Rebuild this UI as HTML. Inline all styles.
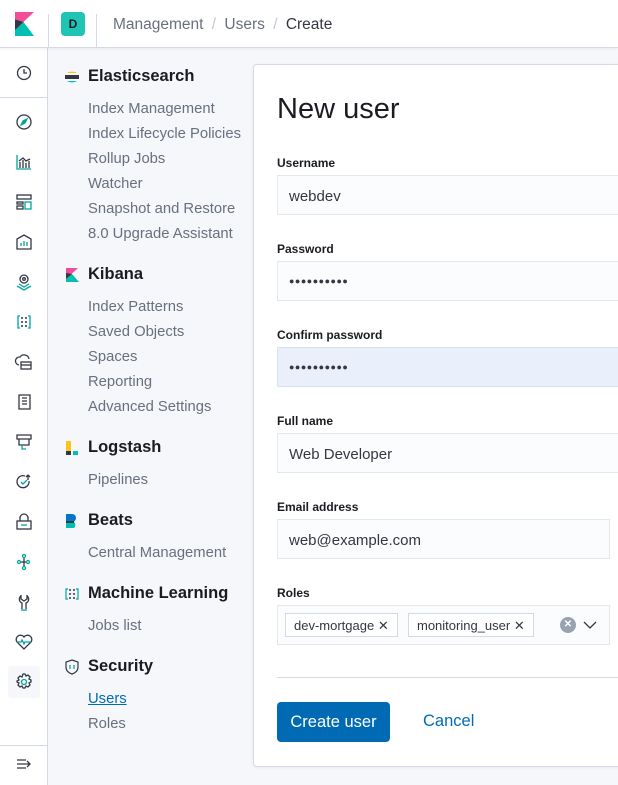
<!DOCTYPE html>
<html><head><style>
*{box-sizing:border-box;margin:0;padding:0}
body{width:618px;height:785px;overflow:hidden;background:#f5f7fa;font-family:"Liberation Sans",sans-serif;position:relative;color:#343741}
.hdr{position:absolute;left:0;top:0;width:618px;height:48px;background:#fff;border-bottom:1px solid #d3dae6;box-shadow:0 1px 3px rgba(0,0,0,.06);z-index:3}
.rail{position:absolute;left:0;top:48px;width:48px;height:737px;background:#fff;border-right:1px solid #d3dae6;z-index:2}
.ic{position:absolute;left:14px;width:20px;height:20px}
.sec{position:absolute;left:64px;font-weight:bold;font-size:16.5px;color:#1a1c21;display:flex;align-items:center}
.sec .lg{width:16px;height:16px;margin-right:8px}
.it{position:absolute;left:88px;font-size:14.8px;color:#69707d}
.panel{position:absolute;left:253px;top:64px;width:400px;height:703px;background:#fff;border:1px solid #d3dae6;border-radius:4px;box-shadow:0 1px 4px rgba(0,0,0,.05)}
.lbl{position:absolute;left:277px;font-size:12px;font-weight:bold;color:#1a1c21}
.inp{position:absolute;left:277px;width:360px;height:40px;background:#fbfcfd;border:1px solid #e4e7ec;font-size:15px;color:#343741;padding:12px 11px;}
.dots{font-size:9px;letter-spacing:0.5px;padding-top:14px}
</style></head><body>
<div class="hdr">
 <svg style="position:absolute;left:15px;top:12px" width="19" height="24" viewBox="0 0 19 24"><path d="M0 0H19L0 18Z" fill="#f04e98"/><path d="M0 18L8.5 10 19 24H0Z" fill="#00bfb3"/><path d="M0 7.5L8.5 10 0 18Z" fill="#343741"/></svg>
 <div style="position:absolute;left:48px;top:14px;width:1px;height:34px;background:#d3dae6"></div>
 <div style="position:absolute;left:61px;top:12px;width:24px;height:24px;border-radius:4px;background:#20c4b4;font-size:12px;font-weight:bold;color:#1a1c21;text-align:center;line-height:24px">D</div>
 <div style="position:absolute;left:96px;top:14px;width:1px;height:34px;background:#d3dae6"></div>
 <div style="position:absolute;left:113px;top:16px;font-size:15.5px;color:#69707d">Management <span style="color:#c2c8d2;margin:0 4px">/</span> Users <span style="color:#c2c8d2;margin:0 4px">/</span> <span style="color:#343741">Create</span></div>
</div>
<div class="rail">
 <div style="position:absolute;left:0;top:49px;width:48px;height:1px;background:#d3dae6"></div>
 <svg class="ic" style="top:15px" viewBox="0 0 20 20" fill="none" stroke="#343741" stroke-width="1.3"><circle cx="10" cy="10" r="6.5"/><path d="M10 6v4h3"/></svg>
 <svg class="ic" style="top:64px" viewBox="0 0 20 20" fill="none" stroke="#343741" stroke-width="1.3"><circle cx="10" cy="10" r="7"/><path d="M7 13l2-4 4-2-2 4z" fill="#00a69b" stroke="#00a69b"/></svg>
 <svg class="ic" style="top:104px" viewBox="0 0 20 20" fill="none" stroke="#00a69b" stroke-width="1.3"><path d="M3 3v14h14" /><path d="M6 16v-6M9 16V8M12 16v-5M15 16V9M5 9l4-3 3 3 4-2" stroke="#343741"/></svg>
 <svg class="ic" style="top:144px" viewBox="0 0 20 20" fill="none" stroke="#343741" stroke-width="1.3"><rect x="3" y="3" width="14" height="4"/><rect x="3" y="10" width="6" height="2"/><rect x="3" y="14" width="6" height="3"/><rect x="11" y="10" width="6" height="7" stroke="#00a69b"/></svg>
 <svg class="ic" style="top:184px" viewBox="0 0 20 20" fill="none" stroke="#343741" stroke-width="1.3"><path d="M3 17V7l7-4 7 4v10z"/><path d="M7 14v-3M10 14V9M13 14v-4" stroke="#00a69b"/></svg>
 <svg class="ic" style="top:224px" viewBox="0 0 20 20" fill="none" stroke="#343741" stroke-width="1.3"><circle cx="10" cy="7" r="4"/><circle cx="10" cy="7" r="1.3"/><path d="M3 14l7 4 7-4M5 12l5 3 5-3" stroke="#00a69b"/></svg>
 <svg class="ic" style="top:264px" viewBox="0 0 20 20" fill="none" stroke="#00a69b" stroke-width="1.3"><path d="M6 4H4v12h2M14 4h2v12h-2"/><g fill="#343741" stroke="none"><circle cx="8" cy="6" r="1"/><circle cx="12" cy="6" r="1"/><circle cx="8" cy="10" r="1"/><circle cx="12" cy="10" r="1"/><circle cx="8" cy="14" r="1"/><circle cx="12" cy="14" r="1"/></g></svg>
 <svg class="ic" style="top:304px" viewBox="0 0 20 20" fill="none" stroke="#343741" stroke-width="1.3"><path d="M5 13a4 4 0 0 1 1-8 5 5 0 0 1 9 2"/><rect x="7" y="10" width="10" height="7"/><path d="M7 13h10"/></svg>
 <svg class="ic" style="top:344px" viewBox="0 0 20 20" fill="none" stroke="#343741" stroke-width="1.3"><path d="M5 17V3h11v14zM8 6h5M8 9h5M8 12h5"/></svg>
 <svg class="ic" style="top:384px" viewBox="0 0 20 20" fill="none" stroke="#343741" stroke-width="1.3"><path d="M3 3h14v4H3zM5 7v6h10V7" /><path d="M8 13v4h4" stroke="#00a69b"/></svg>
 <svg class="ic" style="top:424px" viewBox="0 0 20 20" fill="none" stroke="#343741" stroke-width="1.3"><path d="M15 9a6 6 0 1 1-4-5"/><path d="M7 10l2 2 4-4" stroke="#00a69b"/><path d="M14 3v5M12 5l2-2 2 2"/></svg>
 <svg class="ic" style="top:464px" viewBox="0 0 20 20" fill="none" stroke="#343741" stroke-width="1.3"><path d="M6 9V6a4 4 0 0 1 8 0v3"/><rect x="3" y="9" width="14" height="8"/><path d="M8 12v2M10 12v2M12 12v2" stroke="#00a69b"/></svg>
 <svg class="ic" style="top:504px" viewBox="0 0 20 20" fill="none" stroke="#00a69b" stroke-width="1.3"><circle cx="10" cy="4" r="1.5"/><circle cx="5" cy="10" r="1.5"/><circle cx="14" cy="10" r="1.5"/><circle cx="10" cy="16" r="1.5"/><path d="M7 10h5M10 6v8" stroke="#343741"/></svg>
 <svg class="ic" style="top:544px" viewBox="0 0 20 20" fill="none" stroke="#343741" stroke-width="1.3"><path d="M7 3v4l3 2 3-2V3M7 4a4 4 0 0 0 1 7v6M13 4a4 4 0 0 1-1 7v6"/><path d="M7 18h6" stroke="#00a69b"/></svg>
 <svg class="ic" style="top:584px" viewBox="0 0 20 20" fill="none" stroke="#343741" stroke-width="1.3"><path d="M10 17l-7-7a4 4 0 0 1 7-5 4 4 0 0 1 7 5z"/><path d="M3 10h4l1-2 2 4 1-2h6" stroke="#00a69b"/></svg>
 <div style="position:absolute;left:8px;top:618px;width:32px;height:32px;background:#f5f7fa;border-radius:3px"></div>
 <svg class="ic" style="top:624px" viewBox="0 0 20 20" fill="none" stroke="#343741" stroke-width="1.3"><circle cx="10" cy="10" r="2.5" stroke="#00a69b"/><path d="M9 2h2l1 2 2-1 2 2-1 2 2 1v2l-2 1 1 2-2 2-2-1-1 2H9l-1-2-2 1-2-2 1-2-2-1V9l2-1-1-2 2-2 2 1z"/></svg>
 <div style="position:absolute;left:0;top:697px;width:48px;height:1px;background:#d3dae6"></div>
 <svg class="ic" style="top:706px" viewBox="0 0 20 20" fill="none" stroke="#343741" stroke-width="1.3"><path d="M3 6h9M3 10h13M3 14h9M13 7l3 3-3 3"/></svg>
</div>

<div class="sec" style="top:67px"><svg class="lg" viewBox="0 0 16 16"><path d="M3 4a6 3 0 0 1 10 0z" fill="#fec514"/><rect x="1" y="6" width="14" height="4" fill="#343741"/><path d="M3 12h10a6 3 0 0 1-10 0z" fill="#00bfb3"/></svg>Elasticsearch</div>
<div class="it" style="top:101px">Index Management</div>
<div class="it" style="top:126px">Index Lifecycle Policies</div>
<div class="it" style="top:151px">Rollup Jobs</div>
<div class="it" style="top:176px">Watcher</div>
<div class="it" style="top:201px">Snapshot and Restore</div>
<div class="it" style="top:226px">8.0 Upgrade Assistant</div>
<div class="sec" style="top:265px"><svg class="lg" viewBox="0 0 16 16"><path d="M2 1h12L2 12z" fill="#f04e98"/><path d="M2 12l6-5 7 8H2z" fill="#00bfb3"/><path d="M2 6l6 1-6 5z" fill="#343741"/></svg>Kibana</div>
<div class="it" style="top:299px">Index Patterns</div>
<div class="it" style="top:324px">Saved Objects</div>
<div class="it" style="top:349px">Spaces</div>
<div class="it" style="top:374px">Reporting</div>
<div class="it" style="top:399px">Advanced Settings</div>
<div class="sec" style="top:438px"><svg class="lg" viewBox="0 0 16 16"><path d="M2 1h5v10H2z" fill="#fec514"/><path d="M2 11h5v4H2z" fill="#343741"/><rect x="9" y="11" width="5" height="4" fill="#00bfb3"/></svg>Logstash</div>
<div class="it" style="top:472px">Pipelines</div>
<div class="sec" style="top:511px"><svg class="lg" viewBox="0 0 16 16"><path d="M2 1h6a4 4 0 0 1 0 8H2z" fill="#0077cc"/><path d="M2 9h8a4 4 0 0 1 0 6H2z" fill="#00bfb3"/><path d="M2 8h8v2H2z" fill="#343741"/></svg>Beats</div>
<div class="it" style="top:545px">Central Management</div>
<div class="sec" style="top:584px"><svg class="lg" viewBox="0 0 16 16" fill="none" stroke="#00a69b" stroke-width="1.2"><path d="M4 3H2v10h2M12 3h2v10h-2"/><g fill="#343741" stroke="none"><circle cx="6" cy="4" r="1"/><circle cx="10" cy="4" r="1"/><circle cx="6" cy="8" r="1"/><circle cx="10" cy="8" r="1"/><circle cx="6" cy="12" r="1"/><circle cx="10" cy="12" r="1"/></g></svg>Machine Learning</div>
<div class="it" style="top:618px">Jobs list</div>
<div class="sec" style="top:657px"><svg class="lg" viewBox="0 0 16 16" fill="none" stroke="#343741" stroke-width="1.2"><path d="M8 1l6 2v5c0 4-3 6-6 7-3-1-6-3-6-7V3z"/><path d="M6 6v4M10 6v4" stroke="#00a69b"/></svg>Security</div>
<div class="it" style="top:691px;color:#006bb4;text-decoration:underline">Users</div>
<div class="it" style="top:716px">Roles</div>

<div class="panel"></div>
<div style="position:absolute;left:277px;top:93px;font-size:29px;color:#1a1c21">New user</div>
<div class="lbl" style="top:156px">Username</div>
<div class="inp" style="top:175px">webdev</div>
<div class="lbl" style="top:242px">Password</div>
<div class="inp dots" style="top:261px">●●●●●●●●●●</div>
<div class="lbl" style="top:328px">Confirm password</div>
<div class="inp dots" style="top:347px;background:#e9f0fb;border-color:#d8e2f2">●●●●●●●●●●</div>
<div class="lbl" style="top:414px">Full name</div>
<div class="inp" style="top:433px">Web Developer</div>
<div class="lbl" style="top:500px">Email address</div>
<div class="inp" style="top:519px;width:333px">web@example.com</div>
<div class="lbl" style="top:586px">Roles</div>
<div class="inp" style="top:605px;width:333px;padding:0"></div>
<div style="position:absolute;left:285px;top:613px;height:24px;border:1px solid #d3dae6;background:#fff;font-size:13px;padding:4px 8px;color:#343741">dev-mortgage ✕</div>
<div style="position:absolute;left:408px;top:613px;height:24px;border:1px solid #d3dae6;background:#fff;font-size:13px;padding:4px 8px;color:#343741">monitoring_user ✕</div>
<div style="position:absolute;left:560px;top:617px;width:16px;height:16px;border-radius:50%;background:#98a2b3;color:#fff;font-size:10px;font-weight:bold;text-align:center;line-height:16px">✕</div>
<svg style="position:absolute;left:583px;top:620px" width="14" height="10" viewBox="0 0 14 10" fill="none" stroke="#343741" stroke-width="1.3"><path d="M1 2l6 6 6-6"/></svg>
<div style="position:absolute;left:277px;top:677px;width:341px;height:1px;background:#d3dae6"></div>
<div style="position:absolute;left:277px;top:702px;width:113px;height:40px;background:#006bb4;border-radius:4px;color:#fff;font-size:16.5px;text-align:center;line-height:40px">Create user</div>
<div style="position:absolute;left:423px;top:712px;font-size:16.5px;color:#006bb4">Cancel</div>
</body></html>
